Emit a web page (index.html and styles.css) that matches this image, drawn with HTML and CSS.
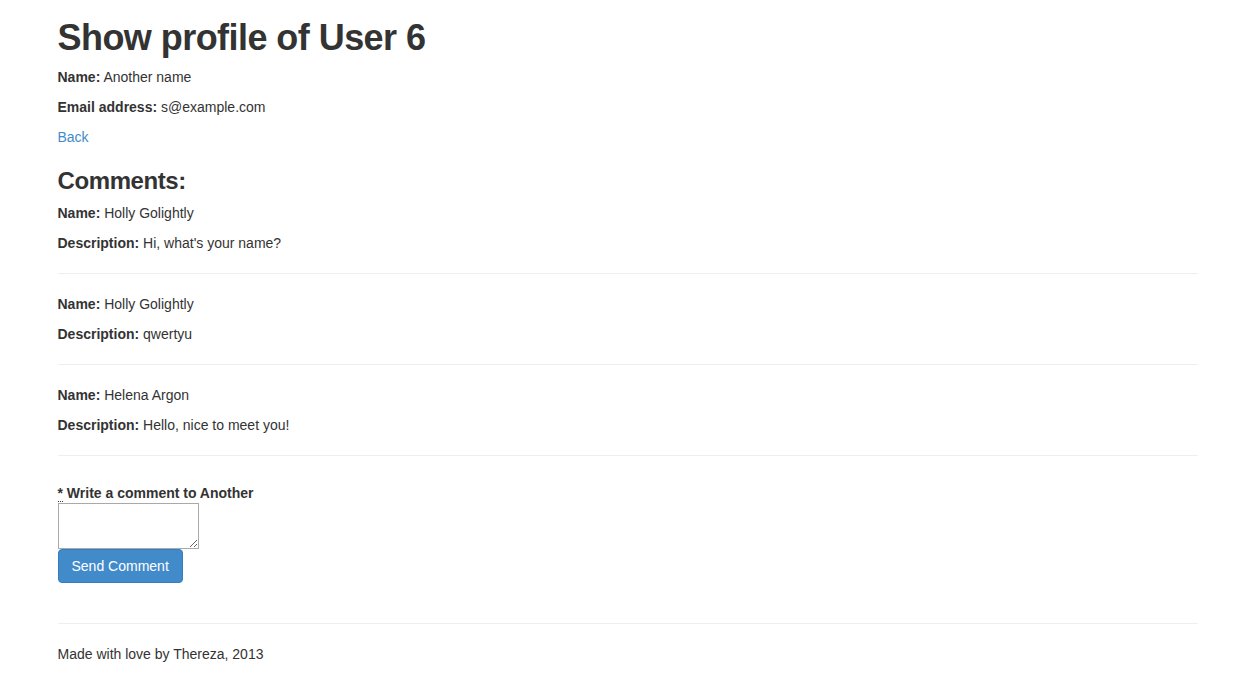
FILE: index.html
```html
<!DOCTYPE html>
<html>
<head>
<meta charset="utf-8">
<title>Show profile</title>
<link rel="stylesheet" href="styles.css">
</head>
<body>
<div class="container">
  <h1 class="title">Show profile of User 6</h1>
  <p><strong>Name:</strong> Another name</p>
  <p><strong>Email address:</strong> s@example.com</p>
  <p><a href="#" class="link">Back</a></p>

  <h3 class="subtitle">Comments:</h3>
  <div class="comment">
    <p><strong>Name:</strong> Holly Golightly</p>
    <p><strong>Description:</strong> Hi, what's your name?</p>
  </div>
  <hr class="rule">
  <div class="comment">
    <p><strong>Name:</strong> Holly Golightly</p>
    <p><strong>Description:</strong> qwertyu</p>
  </div>
  <hr class="rule">
  <div class="comment">
    <p><strong>Name:</strong> Helena Argon</p>
    <p><strong>Description:</strong> Hello, nice to meet you!</p>
  </div>
  <hr class="rule">

  <form class="comment-form">
    <label class="form-label" for="c"><abbr title="required">*</abbr> Write a comment to Another</label>
    <textarea id="c" class="form-text"></textarea>
    <button type="button" class="btn-primary">Send Comment</button>
  </form>

  <hr class="rule footer-rule">
  <footer class="footer">Made with love by Thereza, 2013</footer>
</div>
</body>
</html>
```

FILE: styles.css
```css
html, body {
  margin: 0;
  padding: 0;
  background: #fff;
}
body {
  font-family: "Liberation Sans", Arial, Helvetica, sans-serif;
  font-size: 14px;
  line-height: 20px;
  color: #333;
}
.container {
  width: 1140px;
  margin: 0 auto;
  padding: 0 16px 0 14px;
}
p {
  margin: 0 0 10px;
}
strong {
  font-weight: bold;
}
.title {
  font-size: 36px;
  font-weight: bold;
  line-height: 40px;
  margin: 18px 0 9px;
  letter-spacing: -0.55px;
}
.subtitle {
  font-size: 24px;
  font-weight: bold;
  line-height: 26px;
  margin: 21px 0 9px;
  letter-spacing: -0.4px;
}
.link {
  color: #428bca;
  text-decoration: none;
}
.rule {
  border: 0;
  border-top: 1px solid #eee;
  margin: 20px 0;
  height: 0;
}
.comment-form {
  display: flex;
  flex-direction: column;
  align-items: flex-start;
  padding-top: 7px;
}
.form-label {
  font-weight: bold;
  line-height: 20px;
  margin-bottom: 0;
}
.form-label abbr {
  text-decoration: none;
  border-bottom: 1px dotted #333;
  cursor: help;
}
.form-text {
  width: 141px;
  height: 46px;
  box-sizing: border-box;
  border: 1px solid #a9a9a9;
  margin: 0;
  padding: 2px;
  font-family: "Liberation Mono", monospace;
  font-size: 13px;
}
.btn-primary {
  margin-top: 0;
  height: 34px;
  box-sizing: border-box;
  padding: 6px 13px;
  font-family: "Liberation Sans", Arial, sans-serif;
  font-size: 14px;
  line-height: 20px;
  color: #fff;
  background: #428bca;
  border: 1px solid #357ebd;
  border-radius: 4px;
  cursor: pointer;
}
.footer-rule {
  margin-top: 40px;
}
.footer {
  padding-bottom: 20px;
}
```
